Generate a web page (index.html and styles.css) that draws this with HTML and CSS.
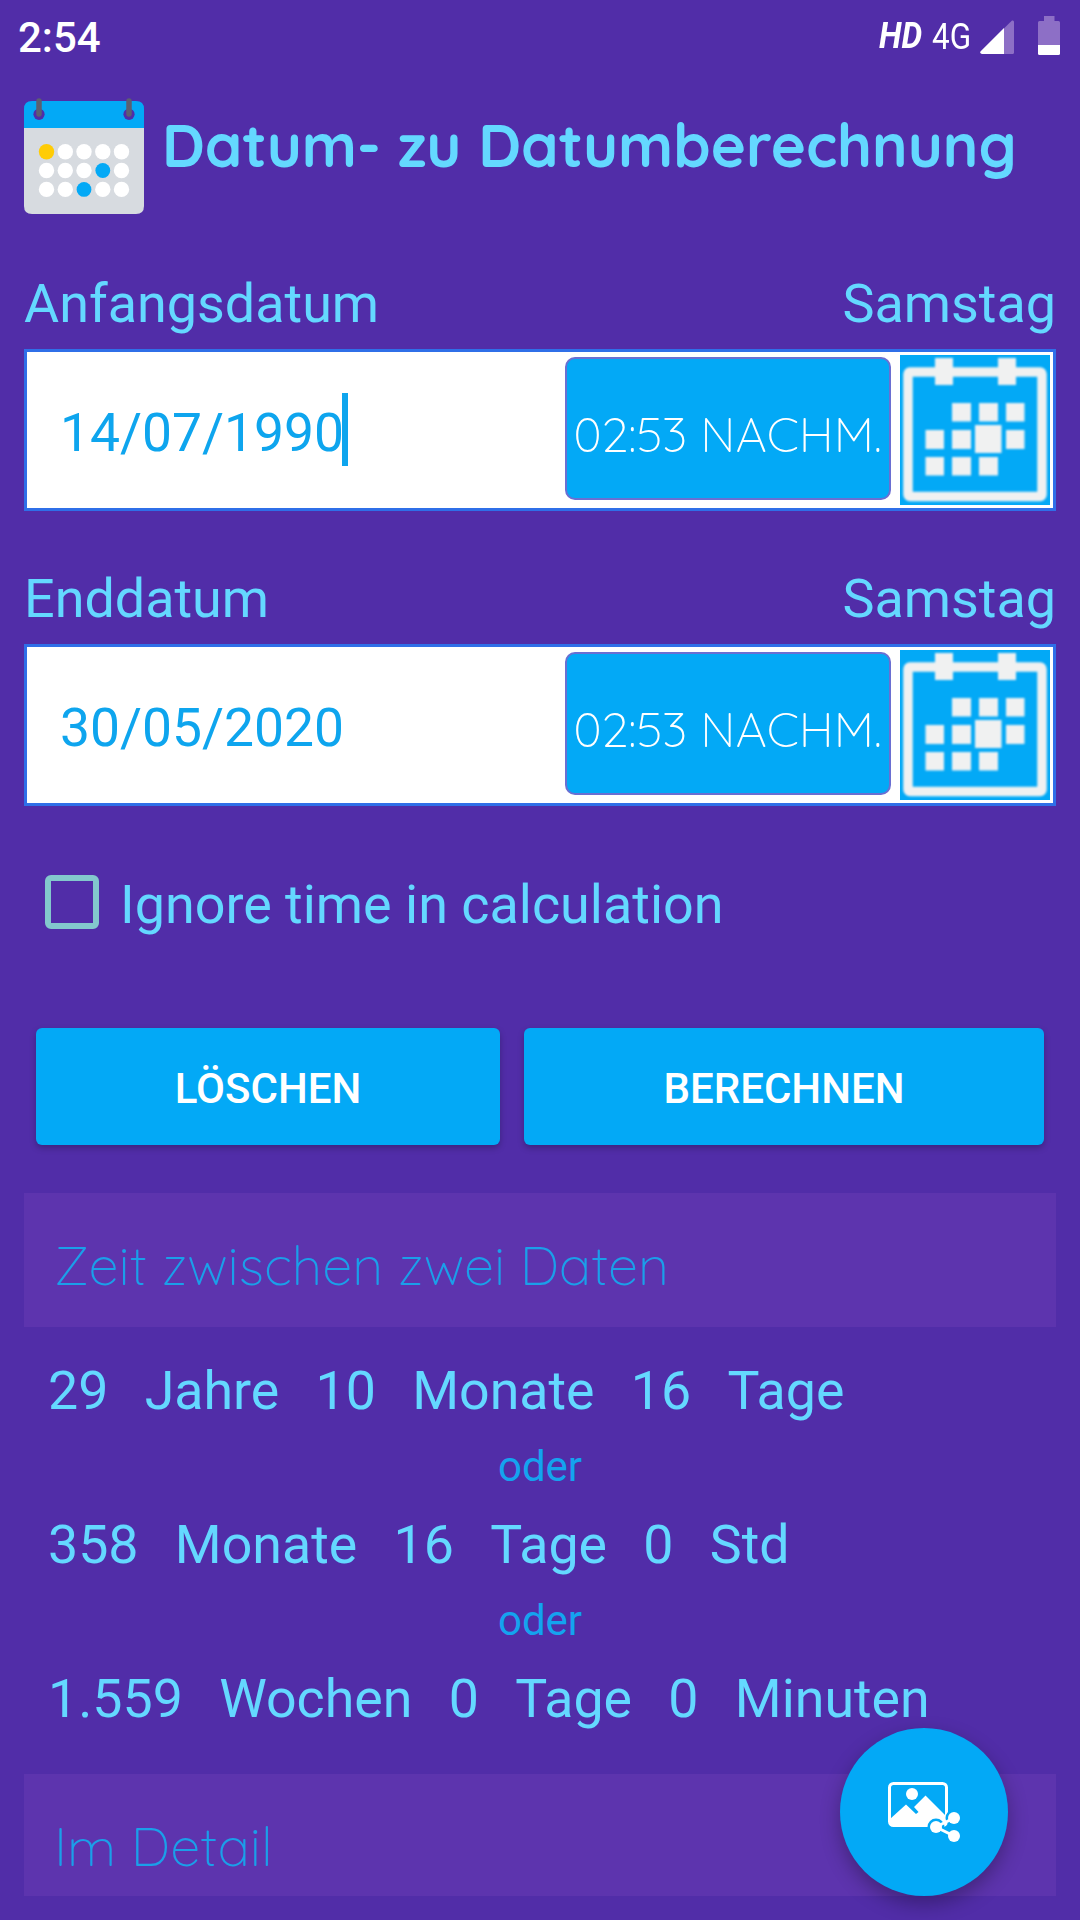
FILE: index.html
```html
<!DOCTYPE html>
<html lang="de">
<head>
    <meta charset="UTF-8">
    <meta name="viewport" content="width=device-width, initial-scale=1.0">
    <title>Datum- zu Datumberechnung</title>
    <link rel="stylesheet" href="styles.css">
</head>
<body>
    <div class="status-bar">
        <span class="clock">2:54</span>
        <div class="status-icons">
            <span class="hd">HD</span>
            <span class="network">4G</span>
            <svg class="signal" viewBox="0 0 34 34">
                <path d="M32 0.600Q34 0 34 2V32.500Q34 34 32.500 34H2Q-1 33 1 31Z" fill="#8d6fc6"/>
                <path d="M24 8V34H2Q-1 33 1 31Z" fill="#fff"/>
            </svg>
            <svg class="battery" viewBox="0 0 22 39">
                <path d="M6 0H16.500V5H20.500Q22 5 22 6.500V29H0V6.500Q0 5 1.500 5H6Z" fill="#8d6fc6"/>
                <path d="M0 29H22V37.500Q22 39 20.500 39H1.500Q0 39 0 37.500Z" fill="#fff"/>
            </svg>
        </div>
    </div>

    <div class="header">
        <svg class="logo" viewBox="0 0 120 118">
            <path d="M0 31V12Q0 4 8 4H112Q120 4 120 12V31Z" fill="#03a9f6"/>
            <path d="M0 31H120V109Q120 117 112 117H8Q0 117 0 109Z" fill="#d7dbe0"/>
            <g fill="#512da8"><circle cx="15" cy="17.300" r="5.600"/><circle cx="105" cy="17.300" r="5.600"/></g>
            <path d="M15 4V17M105 4V17" stroke="#5d5f70" stroke-width="5.500" stroke-linecap="round"/>
            <g fill="#fff">
                <circle cx="41.300" cy="54.700" r="7.700"/><circle cx="60" cy="54.700" r="7.700"/><circle cx="78.800" cy="54.700" r="7.700"/><circle cx="97.500" cy="54.700" r="7.700"/>
                <circle cx="22.500" cy="73.500" r="7.700"/><circle cx="41.300" cy="73.500" r="7.700"/><circle cx="60" cy="73.500" r="7.700"/><circle cx="97.500" cy="73.500" r="7.700"/>
                <circle cx="22.500" cy="92.400" r="7.700"/><circle cx="41.300" cy="92.400" r="7.700"/><circle cx="78.800" cy="92.400" r="7.700"/><circle cx="97.500" cy="92.400" r="7.700"/>
            </g>
            <circle cx="22.500" cy="54.700" r="7.700" fill="#ffcc05"/>
            <circle cx="78.800" cy="73.500" r="7.400" fill="#03a9f6"/>
            <circle cx="60" cy="92.400" r="7.400" fill="#03a9f6"/>
        </svg>
        <h1>Datum- zu Datumberechnung</h1>
    </div>

    <div class="field">
        <div class="labels"><span>Anfangsdatum</span><span>Samstag</span></div>
        <div class="date-box">
            <span class="date">14/07/1990</span><span class="caret"></span>
            <button class="time">02:53 NACHM.</button>
            <svg class="picker" viewBox="0 0 150 150">
                <rect width="150" height="150" fill="#03a9f6"/>
                <g class="picker-shape">
                    <rect x="8" y="17" width="134" height="124.500" rx="2" fill="none" stroke="#f0f1f1" stroke-width="9.500"/>
                    <rect x="35" y="3" width="18" height="27"/><rect x="98" y="3" width="18" height="27"/>
                    <rect x="52" y="48" width="19" height="18.500"/><rect x="79" y="48" width="19" height="18.500"/><rect x="106" y="48" width="18.500" height="18.500"/>
                    <rect x="25.500" y="75" width="18.500" height="19"/><rect x="52" y="75" width="19" height="19"/><rect x="75" y="70" width="26.500" height="28"/><rect x="106" y="75" width="18.500" height="19"/>
                    <rect x="25.500" y="102" width="18.500" height="18.500"/><rect x="52" y="102" width="19" height="18.500"/><rect x="79" y="102" width="19" height="18.500"/>
                </g>
            </svg>
        </div>
    </div>

    <div class="field">
        <div class="labels"><span>Enddatum</span><span>Samstag</span></div>
        <div class="date-box">
            <span class="date">30/05/2020</span>
            <button class="time">02:53 NACHM.</button>
            <svg class="picker" viewBox="0 0 150 150">
                <rect width="150" height="150" fill="#03a9f6"/>
                <g class="picker-shape">
                    <rect x="8" y="17" width="134" height="124.500" rx="2" fill="none" stroke="#f0f1f1" stroke-width="9.500"/>
                    <rect x="35" y="3" width="18" height="27"/><rect x="98" y="3" width="18" height="27"/>
                    <rect x="52" y="48" width="19" height="18.500"/><rect x="79" y="48" width="19" height="18.500"/><rect x="106" y="48" width="18.500" height="18.500"/>
                    <rect x="25.500" y="75" width="18.500" height="19"/><rect x="52" y="75" width="19" height="19"/><rect x="75" y="70" width="26.500" height="28"/><rect x="106" y="75" width="18.500" height="19"/>
                    <rect x="25.500" y="102" width="18.500" height="18.500"/><rect x="52" y="102" width="19" height="18.500"/><rect x="79" y="102" width="19" height="18.500"/>
                </g>
            </svg>
        </div>
    </div>

    <label class="ignore">
        <span class="checkbox"></span>
        <span>Ignore time in calculation</span>
    </label>

    <div class="buttons">
        <button class="btn clear">LÖSCHEN</button>
        <button class="btn calc">BERECHNEN</button>
    </div>

    <h2 class="section-title between"><span>Zeit zwischen zwei Daten</span></h2>

    <div class="results">
        <div class="row"><span>29</span><span>Jahre</span><span>10</span><span>Monate</span><span>16</span><span>Tage</span></div>
        <div class="or">oder</div>
        <div class="row"><span>358</span><span>Monate</span><span>16</span><span>Tage</span><span>0</span><span>Std</span></div>
        <div class="or">oder</div>
        <div class="row"><span>1.559</span><span>Wochen</span><span>0</span><span>Tage</span><span>0</span><span>Minuten</span></div>
    </div>

    <h2 class="section-title detail"><span>Im Detail</span></h2>

    <!-- share result as image -->
    <button class="fab">
        <svg viewBox="0 0 72 60">
            <rect x="1.500" y="1.500" width="57" height="42" rx="4" fill="none" stroke="#fff" stroke-width="3"/>
            <circle cx="24" cy="12" r="6" fill="#fff"/>
            <path d="M2 37L18 22.500L28 32L30.500 30L26 25L37.500 13.500L58 34V43H2Z" fill="#fff"/>
            <g stroke="#03a9f6" stroke-width="5" fill="#03a9f6"><circle cx="48" cy="45" r="6"/><circle cx="66" cy="36" r="6"/></g>
            <path d="M66 36L48 45L66 54" fill="none" stroke="#fff" stroke-width="3"/>
            <g fill="#fff"><circle cx="48" cy="45" r="6"/><circle cx="66" cy="36" r="6"/><circle cx="66" cy="54" r="6"/></g>
        </svg>
    </button>
</body>
</html>
```
FILE: styles.css
```css
* {
    box-sizing: border-box;
}
body {
    margin: 0;
    width: 1080px;
    height: 1920px;
    overflow: hidden;
    font-family: Roboto, sans-serif;
    font-size: 53.9px;
    color: #64d8ff;
    background-color: #512da8;
}
button {
    border: none;
    padding: 0;
    color: #fff;
    background-color: #03a9f6;
    font-family: inherit;
}
.status-bar {
    height: 76px;
    padding: 0 20px 0 18px;
    display: flex;
    justify-content: space-between;
    color: #fff;
}
.clock {
    font-size: 42px;
    font-weight: 500;
    line-height: 75px;
}
.status-icons {
    display: flex;
    align-items: flex-start;
    line-height: 73px;
}
.hd {
    width: 53px;
    font-size: 36px;
    font-weight: 700;
    font-style: italic;
    transform: scaleX(0.91);
    transform-origin: left;
}
.network {
    width: 48px;
    font-size: 37px;
    transform: scaleX(0.85);
    transform-origin: left;
}
.signal {
    width: 34px;
    height: 34px;
    margin-top: 20px;
}
.battery {
    width: 22px;
    height: 39px;
    margin: 16px 0 0 24px;
}
.header {
    height: 184px;
    padding: 21px 24px 0;
    display: flex;
    align-items: flex-start;
}
.logo {
    width: 120px;
    height: 118px;
    flex-shrink: 0;
}
.header h1 {
    margin: 0 0 0 18px;
    font-family: Quicksand, Lato, sans-serif;
    font-size: 59.8px;
    font-weight: 700;
    line-height: 95px;
    white-space: nowrap;
}
.field {
    height: 295px;
    padding: 0 24px;
}
.labels {
    display: flex;
    justify-content: space-between;
    height: 89px;
    line-height: 88px;
}
.date-box {
    height: 162px;
    padding: 3px 3px 3px 33px;
    display: flex;
    align-items: flex-start;
    background-color: #fff;
    border: 3px solid #2f6fe8;
}
.date {
    color: #0ea5ee;
    font-size: 53.4px;
    line-height: 156px;
}
.caret {
    width: 6px;
    height: 73px;
    margin: 38px 0 0 -2px;
    background-color: #0ea5ee;
}
.time {
    width: 326px;
    height: 143px;
    margin: 2px 9px 0 auto;
    padding: 9px 1px 0 0;
    border: 2px solid #6a6fd2;
    border-radius: 10px;
    font-family: Quicksand, Lato, sans-serif;
    font-weight: 300;
    font-size: 48.5px;
}
.picker {
    width: 150px;
    height: 150px;
}
.picker-shape {
    fill: #f0f1f1;
    filter: blur(1px);
}
.ignore {
    height: 178px;
    padding: 25px 45px 0;
    display: flex;
    align-items: flex-start;
    line-height: 60px;
}
.checkbox {
    width: 54px;
    height: 54px;
    margin-right: 21px;
    border: 6px solid #83c8cd;
    border-radius: 6px;
}
.buttons {
    display: flex;
    gap: 24px;
    padding: 0 36px;
}
.btn {
    height: 117px;
    border-radius: 6px;
    font-size: 42px;
    font-weight: 500;
    padding-top: 4px;
    box-shadow: 0 3px 6px rgba(0, 0, 0, 0.25);
}
.clear {
    width: 464px;
}
.calc {
    width: 520px;
}
.section-title {
    margin: 48px 24px 0;
    padding-left: 30px;
    height: 134px;
    font-family: Quicksand, Lato, sans-serif;
    font-size: 54.1px;
    font-weight: 300;
    line-height: 145px;
    color: #1b9fe9;
    background-color: #5d34ae;
}
.results {
    height: 447px;
    padding: 24px 48px 0;
}
.row {
    display: flex;
    gap: 36.3px;
    height: 80px;
    font-size: 53.7px;
    line-height: 80px;
}
.or {
    height: 74px;
    line-height: 72px;
    font-size: 42px;
    text-align: center;
    color: #14a3ef;
}
.detail {
    margin-top: 0;
    height: 122px;
}
.fab {
    position: absolute;
    left: 840px;
    top: 1728px;
    width: 168px;
    height: 168px;
    border-radius: 50%;
    box-shadow: 0 8px 20px rgba(0, 0, 0, 0.3);
}
.fab svg {
    display: block;
    width: 72px;
    height: 60px;
    margin: 0 48px;
}
```
